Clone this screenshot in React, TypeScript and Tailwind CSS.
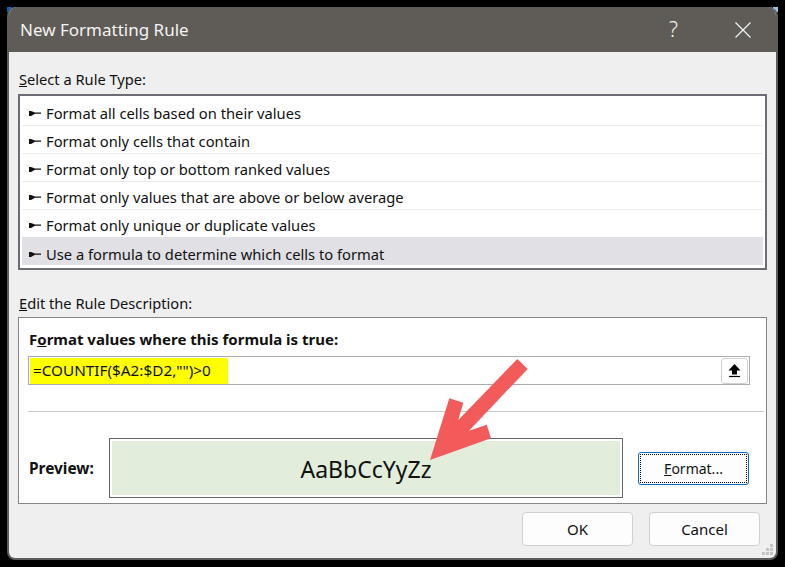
const FONT = "font-['Noto_Sans','Open_Sans',sans-serif]";

const ruleTypes = [
  "Format all cells based on their values",
  "Format only cells that contain",
  "Format only top or bottom ranked values",
  "Format only values that are above or below average",
  "Format only unique or duplicate values",
  "Use a formula to determine which cells to format",
];

const Bullet = () => (
  <svg width="12" height="7" viewBox="0 0 12 7" className="shrink-0">
    <path d="M0 1h2l4 1.6h6v1.1H6L2 6H0z" fill="#111" />
  </svg>
);

const DialogButton = ({ label }: { label: string }) => (
  <button className="h-[34px] w-[111px] rounded-[4px] border border-[#d0d0d0] bg-[#fdfdfd] text-[15px] text-[#111]">
    {label}
  </button>
);

export default function App() {
  return (
    <div className={`relative h-[567px] w-[785px] overflow-hidden bg-black pt-[7px] pl-[7px] ${FONT}`}>
      {/* desktop wallpaper showing through the window corners */}
      <span className="absolute top-[7px] left-[7px] h-[5px] w-[5px] bg-[#0a5fb4]" />
      <span className="absolute top-[7px] left-[773px] h-[5px] w-[5px] bg-[#9cc0e0]" />

      <div className="relative flex h-[553px] w-[771px] flex-col overflow-hidden rounded-t-[9px] rounded-b-[8px] border-x-2 border-b-2 border-[#5c5c5c] bg-[#efefef]">
        <div className="-mx-[2px] flex h-[45px] shrink-0 items-center bg-[#5f5b57] pl-[13px] pr-[27px] text-[#f4f4f4]">
          <span className="text-[17px] leading-none">New Formatting Rule</span>
          <span className="ml-auto mr-[57px] text-[21px] leading-none font-light">?</span>
          <svg width="16" height="16" viewBox="0 0 16 16">
            <path d="M.5.5l15 15M15.5.5l-15 15" stroke="#f4f4f4" strokeWidth="1.2" fill="none" />
          </svg>
        </div>

        <div className="flex flex-1 flex-col px-[9px] text-[#111]">
          <p className="mt-[15px] ml-px h-[24px] text-[14.65px] leading-[24px]">
            <span className="underline">S</span>elect a Rule Type:
          </p>
          <ul className="mt-[3px] h-[176px] border-2 border-[#6d6d75] bg-white px-[2px] pt-[2px]">
            {ruleTypes.map((rule, i) => {
              const last = i === ruleTypes.length - 1;
              return (
                <li
                  key={rule}
                  className={`flex h-[28px] items-center gap-[5px] pl-[7px] text-[14.72px] ${
                    last ? "-mt-px bg-[#e1e0e5] pt-[6px]" : "border-b border-[#ececec] pt-[4px]"
                  }`}
                >
                  <Bullet />
                  <span>{rule}</span>
                </li>
              );
            })}
          </ul>

          <p className="mt-[21px] ml-px h-[26px] text-[14.65px] leading-[24px]">
            <span className="underline">E</span>dit the Rule Description:
          </p>
          <div className="h-[187px] border border-[#85858c] bg-white pt-[9px]">
            <p className="ml-[10px] h-[24px] text-[15px] leading-[24px] font-bold">
              F<span className="underline">o</span>rmat values where this formula is true:
            </p>
            <div className="mt-[5px] ml-[9px] flex h-[29px] w-[722px] items-center border border-[#acacac] pl-[1px]">
              <span className="flex h-[26px] w-[198px] items-center bg-[#ffff00] pl-[3px] text-[15.3px] whitespace-nowrap">
                =COUNTIF($A2:$D2,"")&gt;0
              </span>
              <button className="mr-[1px] ml-auto flex h-[26px] w-[27px] items-center justify-center rounded-[3px] border border-[#d0d0d0]">
                <svg width="13" height="14" viewBox="0 0 13 14">
                  <path d="M6.5 0L12.5 6.5H9V10.5H4V6.5H.5z" fill="#000" />
                  <path d="M1 12.5h11" stroke="#000" strokeWidth="1.2" />
                </svg>
              </button>
            </div>
            <div className="mt-[26px] ml-[9px] h-px w-[736px] bg-[#c8c8c8]" />
            <div className="mt-[26px] flex items-center">
              <span className="ml-[10px] w-[80px] pt-[2px] text-[15.4px] font-bold">Preview:</span>
              <div className="h-[60px] w-[514px] border border-[#666] bg-white p-[2px]">
                <div className="flex h-full items-center justify-center bg-[#e2eedb] pt-[3px] text-[23px] text-[#111]">
                  AaBbCcYyZz
                </div>
              </div>
              <button className="ml-[15px] h-[33px] w-[111px] rounded-[3px] border border-[#0a6cc4] bg-[#fdfdfd] p-px text-[14px]">
                <span className="flex h-full items-center justify-center border border-dotted border-black">
                  <span>
                    <span className="underline">F</span>ormat...
                  </span>
                </span>
              </button>
            </div>
          </div>

          <div className="mt-[8px] flex justify-end gap-[16px] pr-[7px]">
            <DialogButton label="OK" />
            <DialogButton label="Cancel" />
          </div>
        </div>

        {/* resize grip */}
        <svg width="14" height="14" viewBox="0 0 14 14" className="absolute right-px bottom-px" fill="#c4c4c4">
          <rect x="9" y="1" width="3" height="3" />
          <rect x="5" y="5" width="3" height="3" />
          <rect x="9" y="5" width="3" height="3" />
          <rect x="1" y="9" width="3" height="3" />
          <rect x="5" y="9" width="3" height="3" />
          <rect x="9" y="9" width="3" height="3" />
        </svg>
      </div>

      {/* red annotation arrow on top of the dialog */}
      <svg width="785" height="567" className="pointer-events-none absolute top-0 left-0">
        <polygon
          points="430,460 449.3,398.3 463.3,402.7 458.3,420 517.3,359 527.7,369 469,430.7 486.7,424.7 491,438.3"
          fill="#f35b5b"
        />
      </svg>
    </div>
  );
}
